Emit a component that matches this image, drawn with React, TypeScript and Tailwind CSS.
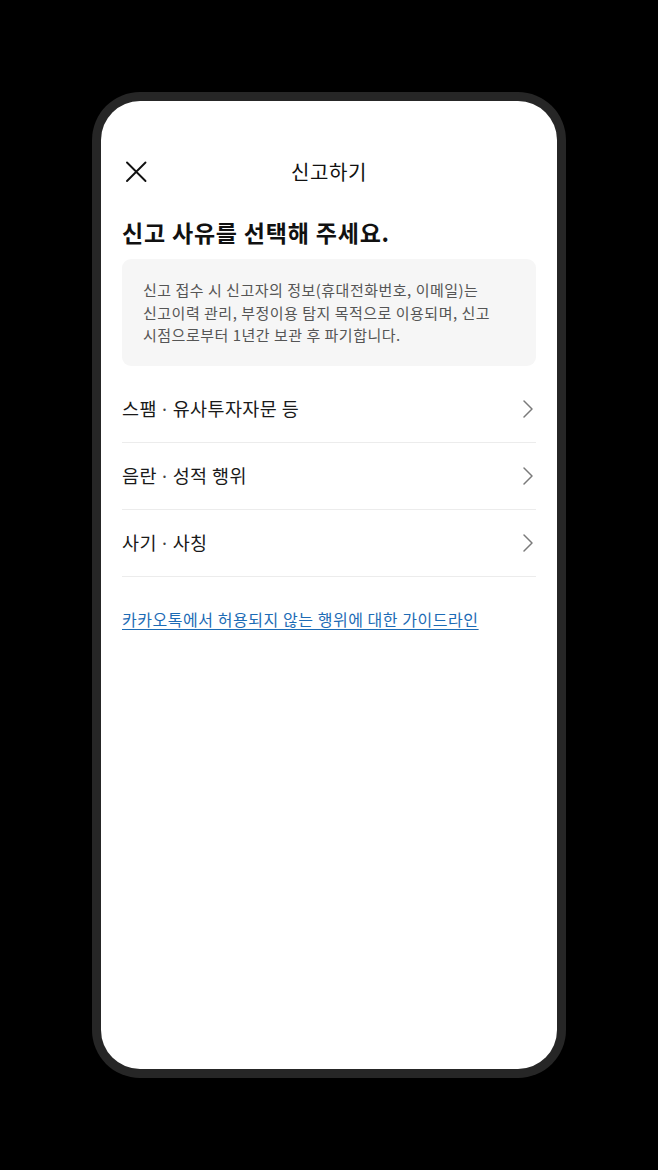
import React from 'react';

const reasons = [
    ['스팸', '유사투자자문 등'],
    ['음란', '성적 행위'],
    ['사기', '사칭'],
];

export default function App() {
    return (
        <div
            className="min-h-[1170px] w-full bg-black pt-[92px]"
            style={{ fontFamily: '"Noto Sans CJK KR", "Noto Sans", sans-serif' }}
        >
            {/* Phone frame */}
            <div className="mx-auto w-[474px] rounded-[48px] bg-[#262626] p-[9px]">
                <div className="h-[968px] rounded-[39px] bg-white px-[21px] pt-[48px]">
                    {/* Header */}
                    <div className="flex h-[46px] items-center">
                        <button className="flex w-[32px] items-center">
                            <svg width="28" height="28" viewBox="0 0 28 28" fill="none">
                                <path d="M5 4.5 L23.5 23 M23.5 4.5 L5 23" stroke="#111" strokeWidth="1.9" strokeLinecap="round" />
                            </svg>
                        </button>
                        <h1 className="flex-1 text-center text-[20px] leading-[46px] tracking-[0.6px] text-[#111]">
                            신고하기
                        </h1>
                        <div className="w-[32px]" />
                    </div>

                    {/* Title */}
                    <h2 className="mt-[22px] text-[23px] leading-[30px] font-bold tracking-[0.8px] text-[#111]">
                        신고 사유를 선택해 주세요.
                    </h2>

                    {/* Notice */}
                    <div className="mt-[12px] rounded-[9px] bg-[#f6f6f6] px-[21px] pt-[20px] pb-[19px] text-[15px] leading-[22.5px] tracking-[0.5px] text-[#555]">
                        신고 접수 시 신고자의 정보(휴대전화번호, 이메일)는
                        <br />
                        신고이력 관리, 부정이용 탐지 목적으로 이용되며, 신고
                        <br />
                        시점으로부터 1년간 보관 후 파기합니다.
                    </div>

                    {/* Reasons */}
                    <ul className="mt-[10px]">
                        {reasons.map(([first, second]) => (
                            <li
                                key={first}
                                className="flex h-[67px] items-center justify-between border-b border-[#ececec]"
                            >
                                <span className="text-[18.5px] tracking-[0.4px] text-[#1a1a1a]">
                                    {first}
                                    <span className="font-['Noto_Sans'] text-[#444]"> · </span>
                                    {second}
                                </span>
                                <svg width="14" height="20" viewBox="0 0 14 20" fill="none" className="mr-[1px]">
                                    <path d="M3 2 L11 10 L3 18" stroke="#7a7a7a" strokeWidth="1.5" strokeLinecap="round" strokeLinejoin="round" />
                                </svg>
                            </li>
                        ))}
                    </ul>

                    {/* Guide link */}
                    <a className="mt-[30px] inline-block text-[16px] leading-[24px] tracking-[0.55px] text-[#1c6bb5] underline underline-offset-[3px]">
                        카카오톡에서 허용되지 않는 행위에 대한 가이드라인
                    </a>
                </div>
            </div>
        </div>
    );
}
